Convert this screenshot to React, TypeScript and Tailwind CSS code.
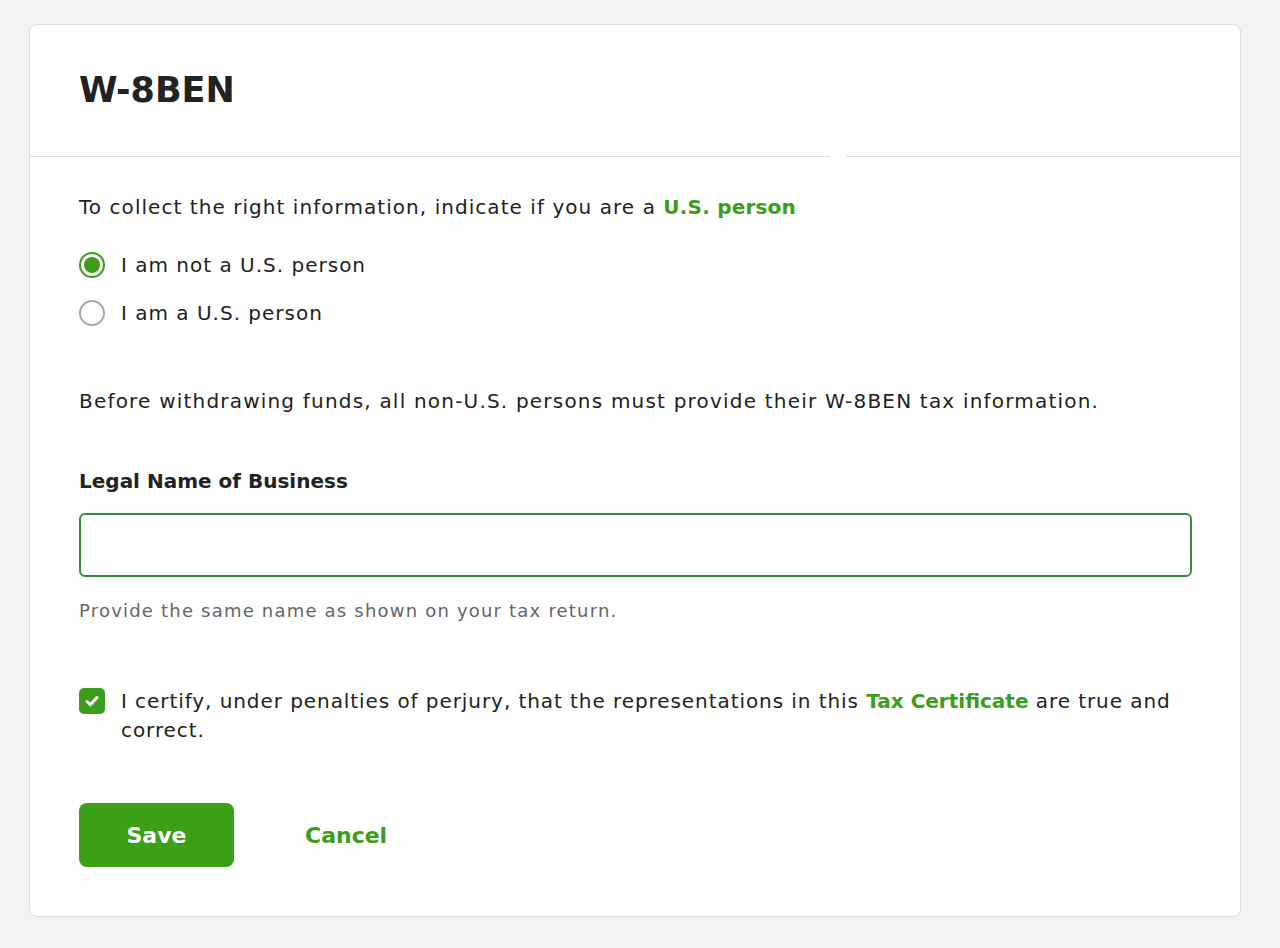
import React from "react";

export default function App() {
  return (
    <div className="min-h-[948px] w-full bg-[#f2f2f5] pt-[24px] pl-[29px]" style={{ fontFamily: '"DejaVu Sans", "Liberation Sans", sans-serif' }}>
      <div className="w-[1212px] h-[893px] rounded-[8px] border border-[#dcdce0] bg-white">
        <div className="relative h-[132px] border-b border-[#dcdce0] px-[49px] flex items-center">
          <h1 className="text-[35px] font-bold text-[#222] leading-none">W-8BEN</h1>
          <div className="absolute bottom-[-1px] left-[800px] h-[3px] w-[16px] bg-white" />
        </div>
        <div className="px-[49px] pt-[36px] text-[#222]">
          <p className="text-[20px] leading-[28px] tracking-[1.05px]">
            <span>To collect the right information, indicate if you are a </span>
            <span className="font-semibold tracking-[0.2px] text-[#3c9c1c]">U.S. person</span>
          </p>
          <div className="mt-[30px] flex flex-col gap-[20px]">
            <label className="flex items-center gap-[16px] text-[20px] leading-[28px] tracking-[1px]">
              <span className="flex h-[26px] w-[26px] items-center justify-center rounded-full border-[2px] border-[#3c9c1c]">
                <span className="h-[16px] w-[16px] rounded-full bg-[#3c9c1c]" />
              </span>
              <span>I am not a U.S. person</span>
            </label>
            <label className="flex items-center gap-[16px] text-[20px] leading-[28px] tracking-[1px]">
              <span className="h-[26px] w-[26px] rounded-full border-[2px] border-[#a8a8a8]" />
              <span>I am a U.S. person</span>
            </label>
          </div>
          <p className="mt-[60px] text-[20px] leading-[28px] tracking-[1.2px]">
            Before withdrawing funds, all non-U.S. persons must provide their W-8BEN tax information.
          </p>
          <div className="mt-[52px] text-[20px] font-bold leading-[28px]">Legal Name of Business</div>
          <div className="mt-[18px] h-[64px] w-[1113px] rounded-[6px] border-[2px] border-[#3b8a3b]" />
          <p className="mt-[21px] text-[18px] leading-[26px] tracking-[1.2px] text-[#666]">Provide the same name as shown on your tax return.</p>
          <div className="mt-[63px] flex items-start gap-[16px]">
            <span className="mt-[1px] flex h-[26px] w-[26px] shrink-0 items-center justify-center rounded-[5px] bg-[#3c9c1c]">
              <svg width="18" height="18" viewBox="0 0 18 18" fill="none">
                <path d="M4 9.5l3.3 3.2L14 5.5" stroke="white" strokeWidth="3" strokeLinecap="round" strokeLinejoin="round" />
              </svg>
            </span>
            <p className="text-[20px] leading-[29px] tracking-[0.93px]">
              <span>I certify, under penalties of perjury, that the representations in this </span>
              <span className="font-semibold tracking-[0px] text-[#3c9c1c]">Tax Certificate</span>
              <span> are true and</span>
              <br />
              <span>correct.</span>
            </p>
          </div>
          <div className="mt-[58px] flex items-center">
            <button className="h-[64px] w-[155px] rounded-[8px] bg-[#3aa016] text-[22px] font-bold text-white">Save</button>
            <button className="ml-[71px] text-[22px] font-bold text-[#3c9c1c]">Cancel</button>
          </div>
        </div>
      </div>
    </div>
  );
}
